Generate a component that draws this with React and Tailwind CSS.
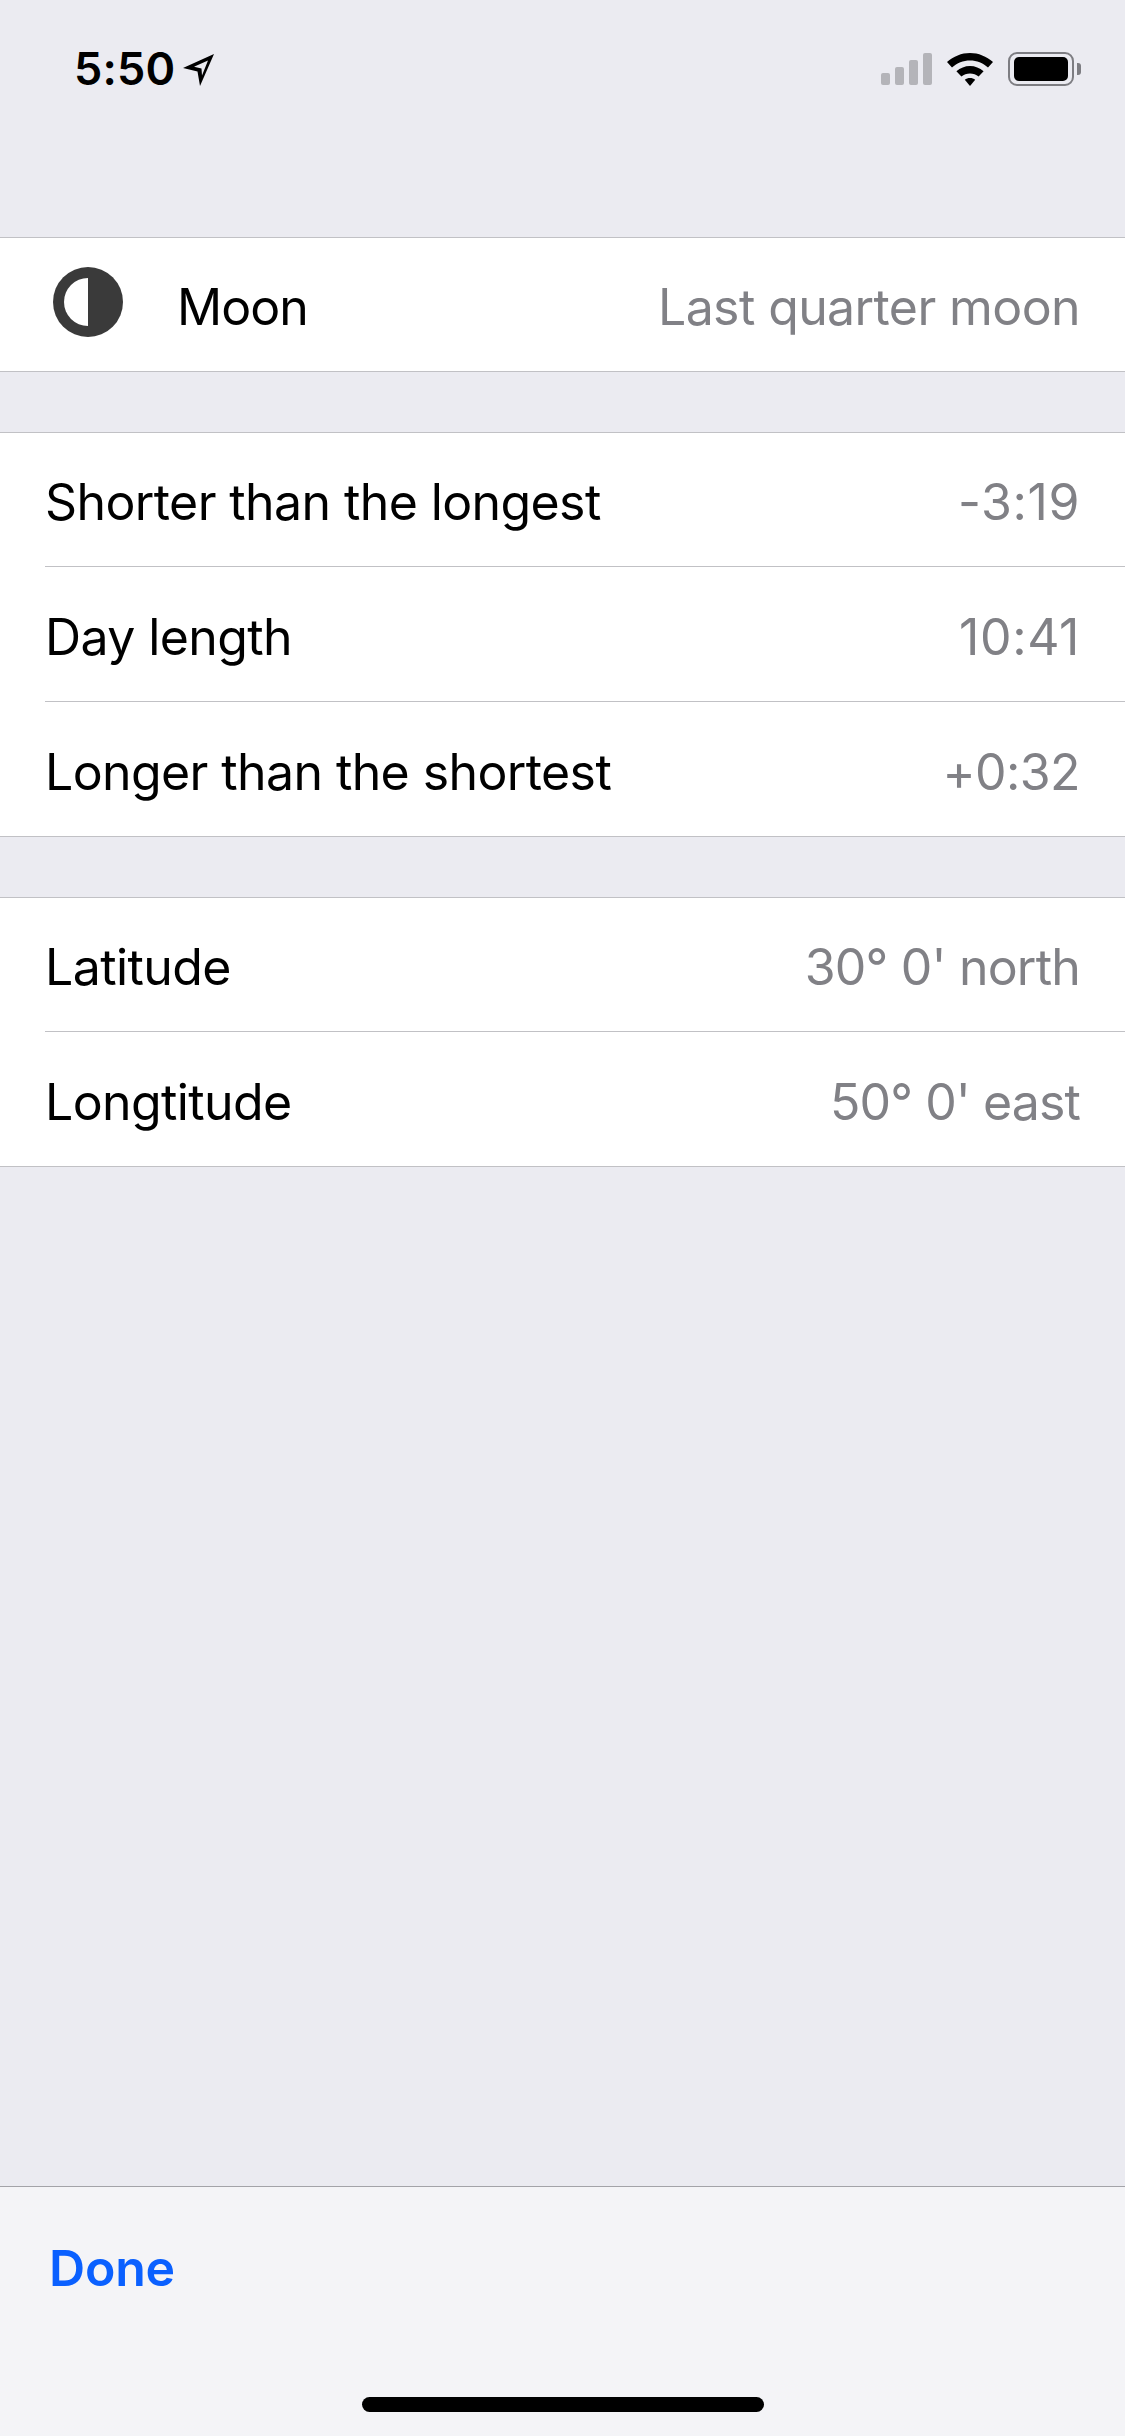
function Row({ label, value, first, last, valueTracking = 'tracking-[-0.6px]' }) {
  let size = 'h-[135px] border-b border-[#c1c1c5]';
  if (first) size = 'h-[134px] border-b border-[#c1c1c5]';
  if (last) size = 'h-[134px]';
  return (
    <div className="pl-[45px]">
      <div className={`flex items-center justify-between pr-[45px] pt-[6px] ${size}`}>
        <span className="text-[50px] tracking-[-0.6px] text-black">{label}</span>
        <span className={`text-[50px] text-[#818186] ${valueTracking}`}>{value}</span>
      </div>
    </div>
  );
}

function Group({ children }) {
  return <div className="border-y border-[#c1c1c5] bg-white">{children}</div>;
}

function StatusBar() {
  return (
    <div className="flex h-[237px] items-start justify-between pl-[74px] pr-[44px] pt-[52px]">
      <div className="flex items-center gap-[8px]">
        <span className="text-[45px] leading-[34px] font-semibold tracking-[0.2px] text-black">5:50</span>
        <svg width="32" height="32" viewBox="0 0 32 32" className="mt-[2px]">
          <path fillRule="evenodd" d="M31 0 L17 32 L14.5 17.5 L0 14 Z M25 6.5 L11 12.8 L18.5 14.5 L19 21.5 Z" fill="#000" />
        </svg>
      </div>
      <div className="flex items-center">
        <div className="flex items-end gap-[5px]">
          <div className="h-[12px] w-[9px] rounded-[2px] bg-[#b4b4b9]" />
          <div className="h-[18px] w-[9px] rounded-[2px] bg-[#b4b4b9]" />
          <div className="h-[25px] w-[9px] rounded-[2px] bg-[#b4b4b9]" />
          <div className="h-[32px] w-[9px] rounded-[2px] bg-[#b4b4b9]" />
        </div>
        <svg width="46" height="33" viewBox="0 0 46 33" className="ml-[15px]">
          <path d="M23 0 C31.5 0 39.5 3.4 46 9 L41 14.5 C36 10 29.8 7.5 23 7.5 C16.2 7.5 10 10 5 14.5 L0 9 C6.5 3.4 14.5 0 23 0 Z" fill="#000" />
          <path d="M23 13 C28 13 32.8 15 36.6 18.3 L31.6 23.6 C29.2 21.6 26.2 20.4 23 20.4 C19.8 20.4 16.8 21.6 14.4 23.6 L9.4 18.3 C13.2 15 18 13 23 13 Z" fill="#000" />
          <path d="M23 25 C25 25 26.8 25.6 28.2 26.8 L23 33 L17.8 26.8 C19.2 25.6 21 25 23 25 Z" fill="#000" />
        </svg>
        <div className="ml-[15px] flex h-[34px] w-[66px] items-center justify-center rounded-[9px] border-[2px] border-[#7d7d82]">
          <div className="h-[24px] w-[54px] rounded-[5px] bg-black" />
        </div>
        <div className="ml-[3px] h-[12px] w-[4px] rounded-r-[3px] bg-[#7d7d82]" />
      </div>
    </div>
  );
}

function MoonIcon() {
  return (
    <svg width="72" height="72" viewBox="0 0 72 72" className="mb-[6px] ml-[52px]">
      <circle cx="36" cy="36" r="35" fill="#3a3a3a" />
      <path d="M36 12 A24 24 0 0 0 36 60 Z" fill="#fff" />
    </svg>
  );
}

export default function App() {
  return (
    <div
      className="flex h-[2436px] w-[1125px] flex-col overflow-hidden bg-[#ebebf1]"
      style={{ fontFamily: 'Inter, "Liberation Sans", sans-serif' }}
    >
      <StatusBar />

      <Group>
        <div className="flex h-[133px] items-center justify-between pr-[45px]">
          <div className="flex items-center">
            <MoonIcon />
            <span className="ml-[53px] pt-[6px] text-[50px] tracking-[-1px] text-black">Moon</span>
          </div>
          <span className="pt-[6px] text-[50px] tracking-[-0.6px] text-[#818186]">Last quarter moon</span>
        </div>
      </Group>

      <div className="h-[60px]" />

      <Group>
        <Row label="Shorter than the longest" value="-3:19" first valueTracking="tracking-[0.6px]" />
        <Row label="Day length" value="10:41" valueTracking="tracking-[0.6px]" />
        <Row label="Longer than the shortest" value="+0:32" last />
      </Group>

      <div className="h-[60px]" />

      <Group>
        <Row label="Latitude" value="30° 0' north" first valueTracking="tracking-[-0.8px]" />
        <Row label="Longtitude" value="50° 0' east" last valueTracking="tracking-[-0.9px]" />
      </Group>

      <div className="flex-1" />

      <div className="relative h-[250px] border-t border-[#a3a3a8] bg-[#f4f4f7] pl-[49px] pt-[44px]">
        <span className="text-[50px] font-semibold tracking-[-0.2px] text-[#0a60ff]">Done</span>
        <div className="absolute bottom-[24px] left-[362px] h-[15px] w-[402px] rounded-full bg-black" />
      </div>
    </div>
  );
}
